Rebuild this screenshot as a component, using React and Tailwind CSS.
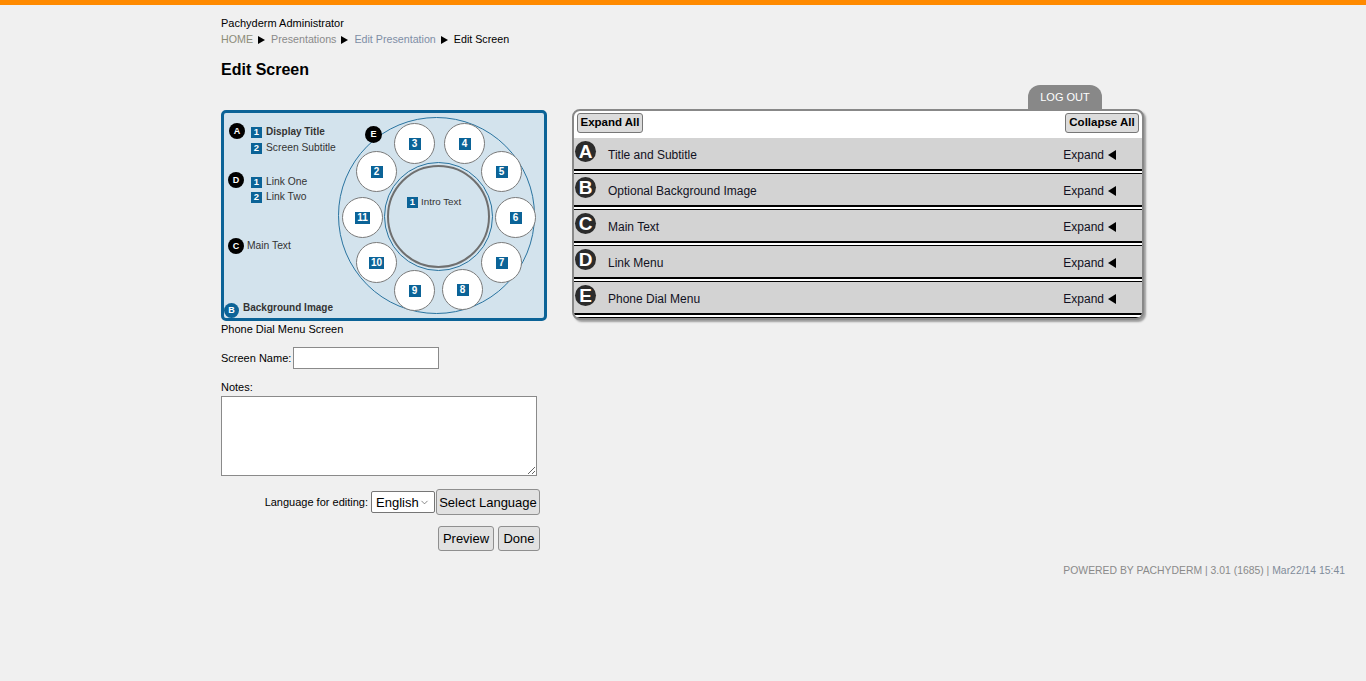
import React from "react";
import { ChevronDown } from "lucide-react";

const dialButtons = [
  { n: "2", x: 132, y: 38 },
  { n: "3", x: 170, y: 10 },
  { n: "4", x: 220, y: 10 },
  { n: "5", x: 257, y: 38 },
  { n: "6", x: 271, y: 84 },
  { n: "7", x: 257, y: 129 },
  { n: "8", x: 218, y: 156 },
  { n: "9", x: 170, y: 157 },
  { n: "10", x: 132, y: 129 },
  { n: "11", x: 118, y: 84 },
];

const sections = [
  { letter: "A", title: "Title and Subtitle" },
  { letter: "B", title: "Optional Background Image" },
  { letter: "C", title: "Main Text" },
  { letter: "D", title: "Link Menu" },
  { letter: "E", title: "Phone Dial Menu" },
];

function NumBadge({ n, big }) {
  return (
    <span
      className={
        big
          ? "inline-flex items-center justify-center h-[12px] min-w-[12px] px-[2px] bg-[#0b6397] text-white text-[10px] font-bold leading-none"
          : "inline-flex items-center justify-center h-[11px] min-w-[11px] px-[2px] bg-[#0b6397] text-white text-[9.5px] font-bold leading-none"
      }
    >
      {n}
    </span>
  );
}

function LetterDot({ l }) {
  return (
    <span className="flex items-center justify-center w-[16px] h-[16px] rounded-full bg-black text-white text-[9px] font-bold leading-none">
      {l}
    </span>
  );
}

function Arrow({ left }) {
  return (
    <svg width="8" height="10" viewBox="0 0 8 10" className="shrink-0">
      <path d={left ? "M8 0 L0 5 L8 10 Z" : "M0 1 L7 5 L0 9 Z"} fill="#000" />
    </svg>
  );
}

/* ================= DIAGRAM ================= */

function DialDiagram() {
  return (
    <div className="relative w-[326px] h-[211px] border-[3px] border-[#0b6397] rounded-[5px] bg-[#d3e3ed] text-[#333] text-[10px] leading-[12px]">
      {/* A */}
      <div className="absolute left-[5px] top-[10px]">
        <LetterDot l="A" />
      </div>
      <div className="absolute left-[27px] top-[13px] flex items-center gap-[4px] font-bold">
        <NumBadge n="1" /> Display Title
      </div>
      <div className="absolute left-[27px] top-[29px] flex items-center gap-[4px] text-[10.3px]">
        <NumBadge n="2" /> Screen Subtitle
      </div>

      {/* D */}
      <div className="absolute left-[4px] top-[59px]">
        <LetterDot l="D" />
      </div>
      <div className="absolute left-[27px] top-[63px] flex items-center gap-[4px] text-[10.3px]">
        <NumBadge n="1" /> Link One
      </div>
      <div className="absolute left-[27px] top-[78px] flex items-center gap-[4px] text-[10.3px]">
        <NumBadge n="2" /> Link Two
      </div>

      {/* C */}
      <div className="absolute left-[4px] top-[125px]">
        <LetterDot l="C" />
      </div>
      <div className="absolute left-[23px] top-[127px] text-[10.3px]">Main Text</div>

      {/* B */}
      <div className="absolute left-0 top-[190px] flex items-center justify-center w-[15px] h-[15px] rounded-full bg-[#0b6397] text-white text-[9px] font-bold leading-none">
        B
      </div>
      <div className="absolute left-[19px] top-[189px] font-bold">Background Image</div>

      {/* dial */}
      <div className="absolute left-[114px] top-[4px] w-[197px] h-[197px] rounded-full border border-[#2a74a0]" />
      <div className="absolute left-[160px] top-[49px] w-[109px] h-[109px] rounded-full border border-[#2a74a0]" />
      <div className="absolute left-[163px] top-[52px] w-[103px] h-[103px] rounded-full border-2 border-[#6f6f6f]" />
      <div className="absolute left-[183px] top-[83px] flex items-center gap-[3px] text-[9.8px]">
        <NumBadge n="1" /> Intro Text
      </div>

      {dialButtons.map((b) => (
        <div
          key={b.n}
          className="absolute w-[41px] h-[41px] rounded-full bg-white border border-[#7a7a7a] flex items-center justify-center"
          style={{ left: b.x, top: b.y }}
        >
          <NumBadge n={b.n} big />
        </div>
      ))}

      <div className="absolute left-[141px] top-[13px]">
        <span className="flex items-center justify-center w-[17px] h-[17px] rounded-full bg-black text-white text-[9px] font-bold leading-none">
          E
        </span>
      </div>
    </div>
  );
}

export default function App() {
  return (
    <div className="min-h-screen bg-[#f0f0f0] font-['Liberation_Sans',Arial,sans-serif] text-black">
      <div className="h-[5px] bg-[#ff8a00]" />

      <div className="ml-[221px] w-[1124px] pt-[12px]">
        {/* HEADER */}
        <div className="text-[11px] leading-[13px]">Pachyderm Administrator</div>
        <div className="mt-[3px] text-[10.7px] leading-[13px] flex items-center gap-[5px]">
          <span className="text-[#8c8c78]">HOME</span>
          <Arrow />
          <span className="text-[#8a8a8a]">Presentations</span>
          <Arrow />
          <span className="text-[#7e8ea6]">Edit Presentation</span>
          <Arrow />
          <span>Edit Screen</span>
        </div>
        <h1 className="mt-[14px] text-[16px] leading-[20px] font-bold">Edit Screen</h1>

        {/* MAIN */}
        <div className="mt-[5px] flex gap-[25px] items-start">
          {/* LEFT */}
          <div className="w-[326px] pt-[25px] text-[11px] leading-[13px]">
            <DialDiagram />
            <div className="mt-[2px]">Phone Dial Menu Screen</div>

            <div className="mt-[11px] flex items-center gap-[2px]">
              <span>Screen Name:</span>
              <input className="w-[146px] h-[22px] bg-white border border-[#8a8a8a] outline-none px-1 text-[13px]" />
            </div>

            <div className="mt-[12px]">Notes:</div>
            <textarea className="mt-[2px] block w-[316px] h-[80px] bg-white border border-[#8a8a8a] outline-none" />

            <div className="mt-[13px] w-[319px] flex items-center justify-end">
              <span className="mr-[3px]">Language for editing:</span>
              <div className="relative w-[64px] h-[22px] bg-white border border-[#767676] rounded-[2px] flex items-center pl-[4px] text-[13px] leading-none">
                English
                <ChevronDown size={11} strokeWidth={1.5} className="absolute right-[4px] top-[5px] text-[#555]" />
              </div>
              <button className="ml-[1px] w-[104px] h-[26px] bg-[#e1e1e1] border border-[#8f8f8f] rounded-[3px] text-[13px]">
                Select Language
              </button>
            </div>

            <div className="mt-[11px] w-[319px] flex justify-end gap-[4px]">
              <button className="w-[56px] h-[25px] bg-[#e1e1e1] border border-[#8f8f8f] rounded-[3px] text-[13px]">
                Preview
              </button>
              <button className="w-[42px] h-[25px] bg-[#e1e1e1] border border-[#8f8f8f] rounded-[3px] text-[13px]">
                Done
              </button>
            </div>
          </div>

          {/* RIGHT */}
          <div className="w-[572px] flex flex-col">
            <div className="self-end mr-[42px] w-[74px] h-[24px] bg-[#888] rounded-t-[12px] text-white text-[11px] flex items-center justify-center">
              LOG OUT
            </div>
            <div className="border-2 border-[#888] rounded-[8px] bg-white overflow-hidden shadow-[2px_2px_2px_rgba(0,0,0,0.35)]">
              <div className="h-[27px] flex items-start justify-between px-[3px] pt-[2px]">
                <button className="h-[20px] w-[66px] bg-[#dcdcdc] border border-[#777] rounded-[3px] text-[11.5px] font-bold leading-none">
                  Expand All
                </button>
                <button className="h-[20px] w-[74px] bg-[#dcdcdc] border border-[#777] rounded-[3px] text-[11.5px] font-bold leading-none">
                  Collapse All
                </button>
              </div>

              {sections.map((s, i) => (
                <div
                  key={s.letter}
                  className={
                    i === 0
                      ? "h-[33px] bg-[#d3d3d3] border-b-2 border-black mb-[2px] flex items-start"
                      : "h-[34px] bg-[#d3d3d3] border-t border-b-2 border-black mb-[2px] flex items-start"
                  }
                >
                  <span className="mt-[3px] ml-[1px] w-[21px] h-[21px] rounded-full bg-[#2b2b2b] text-white text-[19px] font-bold leading-none flex items-center justify-center">
                    {s.letter}
                  </span>
                  <span className="ml-[12px] mt-[10px] text-[12px] leading-[14px] text-[#111122]">{s.title}</span>
                  <span className="ml-auto mr-[26px] mt-[10px] text-[12px] leading-[14px] text-[#111122] flex items-center gap-[4px]">
                    Expand <Arrow left />
                  </span>
                </div>
              ))}
              <div className="h-px bg-black" />
            </div>
          </div>
        </div>

        {/* FOOTER */}
        <div className="mt-[14px] text-right text-[10.4px] leading-[12px] text-[#8a8a8a]">
          POWERED BY PACHYDERM | 3.01 (1685) | <span className="text-[#7f8c9a]">Mar22/14 15:41</span>
        </div>
      </div>
    </div>
  );
}
